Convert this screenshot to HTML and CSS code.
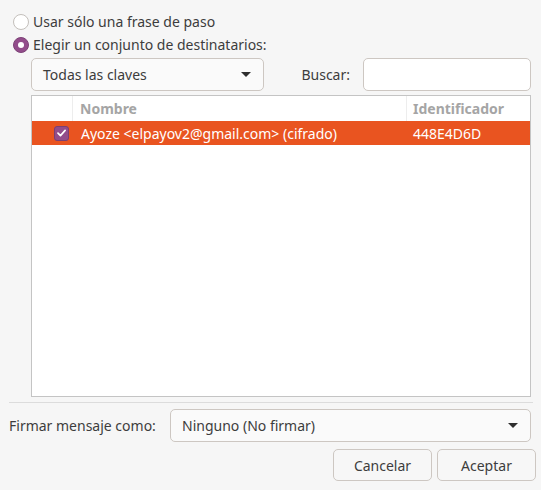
FILE: index.html
```html
<!DOCTYPE html>
<html lang="es">
<head>
<meta charset="utf-8">
<link rel="stylesheet" href="styles.css">
</head>
<body>
<div class="dialog">
  <div class="content">
    <label class="radio-row">
      <span class="radio"></span>
      <span class="radio-text">Usar sólo una frase de paso</span>
    </label>
    <label class="radio-row">
      <span class="radio checked"></span>
      <span class="radio-text">Elegir un conjunto de destinatarios:</span>
    </label>
    <div class="indent">
      <div class="filter-row">
        <div class="combo combo-keys">
          <span class="combo-text">Todas las claves</span>
          <span class="arrow"></span>
        </div>
        <span class="search-label">Buscar:</span>
        <div class="entry"></div>
      </div>
      <div class="tree">
        <div class="tree-header">
          <div class="col col-check"></div>
          <div class="col col-name">Nombre</div>
          <div class="col col-id">Identificador</div>
        </div>
        <div class="tree-row selected">
          <div class="col col-check"><span class="checkbox"><svg width="14" height="14" viewBox="0 0 14 14"><path d="M3.2 7.2 L5.9 9.8 L10.9 4.2" fill="none" stroke="#fff" stroke-width="1.8" stroke-linecap="round" stroke-linejoin="round"/></svg></span></div>
          <div class="col col-name">Ayoze &lt;elpayov2@gmail.com&gt; (cifrado)</div>
          <div class="col col-id">448E4D6D</div>
        </div>
      </div>
    </div>
    <div class="separator"></div>
    <div class="sign-row">
      <span class="sign-label">Firmar mensaje como:</span>
      <div class="combo combo-sign">
        <span class="combo-text">Ninguno (No firmar)</span>
        <span class="arrow"></span>
      </div>
    </div>
  </div>
  <div class="actions">
    <button class="btn">Cancelar</button>
    <button class="btn">Aceptar</button>
  </div>
</div>
</body>
</html>
```

FILE: styles.css
```css
html, body {
  margin: 0;
  padding: 0;
  background: #f6f6f6;
}
body {
  font-family: "Noto Sans", "DejaVu Sans", sans-serif;
  font-size: 14px;
  color: #3d3d3d;
  width: 541px;
  height: 490px;
  overflow: hidden;
}
.dialog {
  display: flex;
  flex-direction: column;
  padding-top: 10px;
}
.content {
  padding: 0 10px 0 8px;
  display: flex;
  flex-direction: column;
}
.radio-row {
  display: flex;
  align-items: center;
  height: 23px;
}
.radio {
  box-sizing: border-box;
  width: 16px;
  height: 16px;
  border-radius: 50%;
  border: 1px solid #c3bfbb;
  background: #fff;
  margin-left: 5px;
  margin-right: 4px;
  position: relative;
}
.radio.checked {
  background: #924d8b;
  border-color: #7d4277;
}
.radio.checked::after {
  content: "";
  position: absolute;
  left: 4px;
  top: 4px;
  width: 6px;
  height: 6px;
  border-radius: 50%;
  background: #fff;
}
.indent {
  margin-left: 23px;
  display: flex;
  flex-direction: column;
}
.filter-row {
  display: flex;
  align-items: center;
  margin-top: 2px;
  height: 33px;
}
.combo {
  box-sizing: border-box;
  height: 33px;
  border: 1px solid #cdc7c2;
  border-radius: 5px;
  background: #fafafa;
  display: flex;
  align-items: center;
  justify-content: space-between;
  padding: 0 12px 0 11px;
}
.combo-keys {
  width: 233px;
}
.arrow {
  width: 0;
  height: 0;
  border-left: 5px solid transparent;
  border-right: 5px solid transparent;
  border-top: 5px solid #2e2e2e;
}
.search-label {
  margin-left: auto;
  margin-right: 13px;
}
.entry {
  box-sizing: border-box;
  width: 168px;
  height: 33px;
  border: 1px solid #cdc7c2;
  border-radius: 5px;
  background: #fff;
}
.tree {
  box-sizing: border-box;
  margin-top: 4px;
  height: 302px;
  border: 1px solid #c4c4c4;
  background: #fff;
  display: flex;
  flex-direction: column;
}
.tree-header, .tree-row {
  display: flex;
  align-items: stretch;
}
.tree-header {
  height: 25px;
  color: #a5a5a5;
  font-weight: bold;
}
.tree-row {
  height: 24px;
}
.tree-row.selected {
  background: #e95420;
  color: #fff;
}
.col {
  display: flex;
  align-items: center;
  box-sizing: border-box;
}
.col-check {
  width: 41px;
  justify-content: flex-end;
  padding-right: 4px;
}
.col-name {
  width: 334px;
  padding-left: 7px;
}
.col-id {
  flex: 1;
  padding-left: 6px;
}
.tree-header .col-check,
.tree-header .col-name {
  border-right: 1px solid #ededed;
}
.tree-row .col-check {
  width: 42px;
  padding-right: 5px;
}
.tree-row .col-name {
  width: 333px;
}
.checkbox {
  box-sizing: border-box;
  width: 15px;
  height: 15px;
  border-radius: 3px;
  background: #924d8b;
  border: 1px solid #7a3f74;
  display: flex;
  align-items: center;
  justify-content: center;
}
.checkbox svg {
  display: block;
}
.separator {
  height: 1px;
  background: #dcdcdc;
  margin: 5px -2px 0 1px;
}
.sign-row {
  display: flex;
  align-items: center;
  margin-top: 6px;
  height: 33px;
}
.sign-label {
  margin-left: 1px;
}
.combo-sign {
  width: 361px;
  margin-left: auto;
}
.actions {
  display: flex;
  justify-content: flex-end;
  gap: 5px;
  padding-right: 5px;
  margin-top: 7px;
}
.btn {
  box-sizing: border-box;
  width: 99px;
  height: 32px;
  border: 1px solid #cdc7c2;
  border-radius: 5px;
  background: #f7f7f7;
  font-family: inherit;
  font-size: 14px;
  color: #3d3d3d;
  padding: 0;
}
```
